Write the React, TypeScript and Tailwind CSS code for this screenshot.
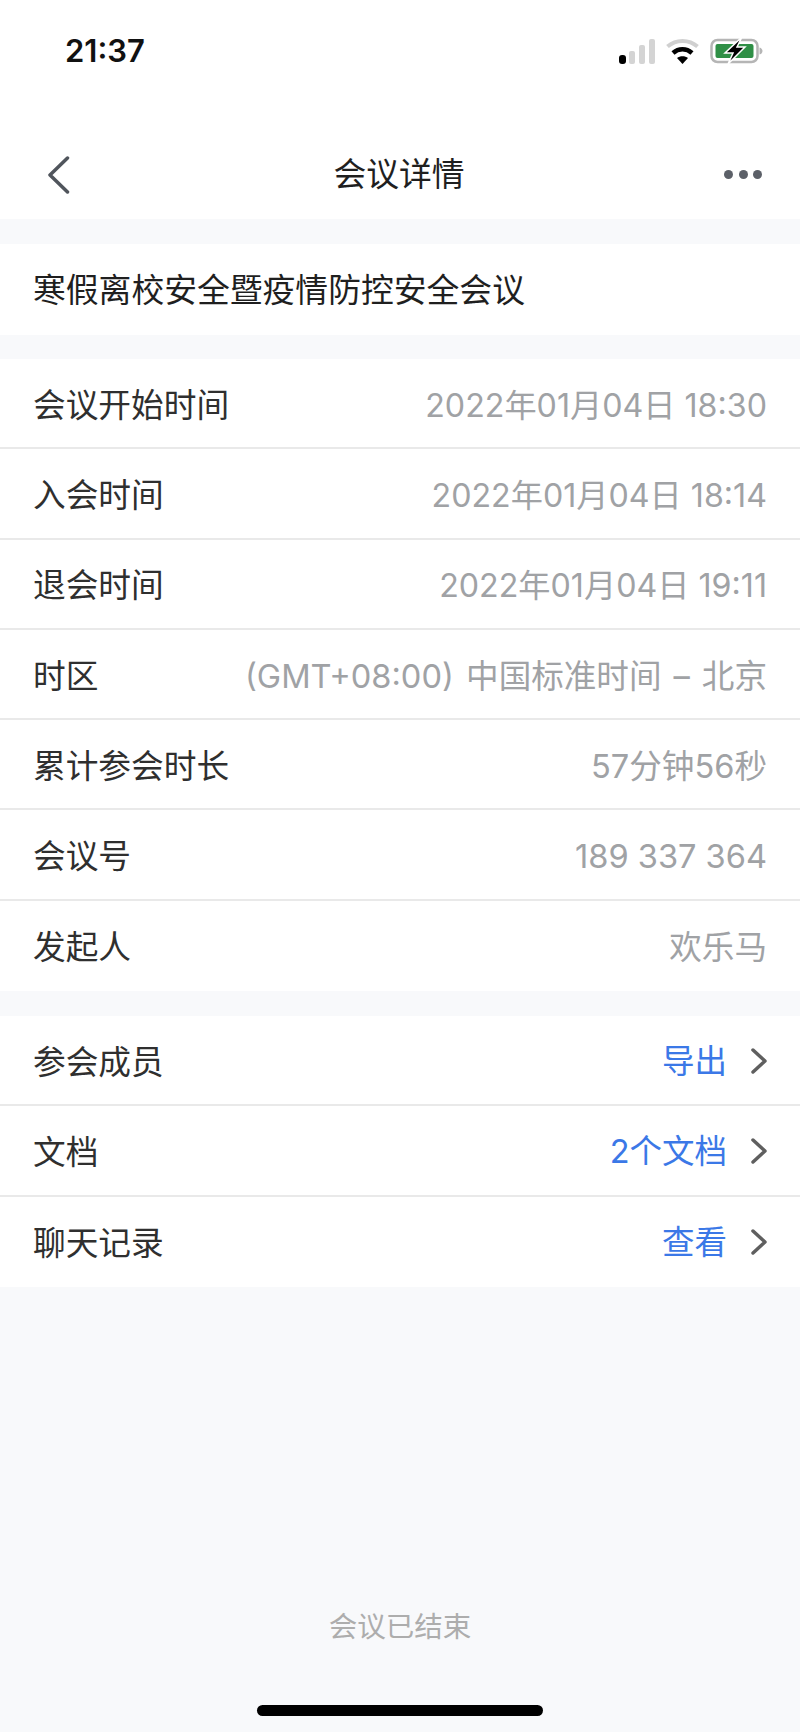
const font = "font-['Inter','Noto_Sans_CJK_SC',sans-serif]";

const infoRows: [string, React.ReactNode][] = [
  ["会议开始时间", <span className="text-[32.200px]">2022年01月04日 18:30</span>],
  ["入会时间", <span className="text-[32.200px]">2022年01月04日 18:14</span>],
  ["退会时间", <span className="text-[32.200px]">2022年01月04日 19:11</span>],
  [
    "时区",
    <>
      (GMT+08:00)<span className="ml-[3px]"> </span>中国标准时间<span className="mx-[12px]">–</span>北京
    </>,
  ],
  ["累计参会时长", "57分钟56秒"],
  ["会议号", "189 337 364"],
  ["发起人", "欢乐马"],
];

const linkRows = [
  ["参会成员", "导出"],
  ["文档", "2个文档"],
  ["聊天记录", "查看"],
];

function StatusIcons() {
  return (
    <div className="flex items-end gap-[11px]">
      {/* signal */}
      <svg width="36" height="25" viewBox="0 0 36 25">
        <rect x="0" y="16" width="7" height="9" rx="3" fill="#000" />
        <rect x="10" y="12" width="6" height="13" rx="2" fill="#d4d4d4" />
        <rect x="20" y="6" width="6" height="19" rx="2" fill="#d4d4d4" />
        <rect x="30" y="0" width="6" height="25" rx="2" fill="#d4d4d4" />
      </svg>
      {/* wifi */}
      <svg width="33" height="26" viewBox="0 0 33 26">
        <path d="M1.5 8.5C10 1 23 1 31.5 8.5" fill="none" stroke="#d0d0d0" strokeWidth="4" />
        <path d="M7 15C12.5 10 20.500 10 26 15" fill="none" stroke="#000" strokeWidth="4.500" />
        <path d="M11 20C14 17.500 19 17.500 22 20L16.500 26Z" fill="#000" />
      </svg>
      {/* battery */}
      <svg width="53" height="27" viewBox="0 0 53 27">
        <rect x="1.500" y="3" width="46" height="22" rx="6" fill="none" stroke="#b5b5b5" strokeWidth="2.500" />
        <rect x="5.500" y="7" width="38" height="14" rx="2" fill="#2f8f46" />
        <path d="M49.500 10.500c2 .5 3 2 3 3.500s-1 3-3 3.500z" fill="#b5b5b5" />
        <path d="M32 0 15 16h8L18 27l17-17h-8z" fill="#000" stroke="#fff" strokeWidth="1.500" />
      </svg>
    </div>
  );
}

function Row({ label, children }: { label: string; children: React.ReactNode }) {
  return (
    <div className="flex h-[90.3px] items-center justify-between border-b-2 border-[#e9e9e9] pl-[33px] pr-[33px] pt-[4px] last:border-b-0">
      <span className="text-[32.700px] text-[#2f2f2f]">{label}</span>
      {children}
    </div>
  );
}

export default function App() {
  return (
    <div className={`flex h-[1732px] w-[800px] flex-col bg-[#f8f9fb] ${font}`}>
      <header className="bg-white">
        <div className="flex h-[110px] items-start justify-between pl-[65px] pr-[37px] pt-[32px]">
          <span className="text-[31px] leading-[38px] font-semibold text-[#111]">21:37</span>
          <div className="pt-[5px]">
            <StatusIcons />
          </div>
        </div>
        <div className="relative flex h-[109px] items-center justify-between pl-[47px] pr-[38px] pt-[20px]">
          <svg width="23" height="38" viewBox="0 0 23 38">
            <path d="M20.500 2 3 19l17.500 17" fill="none" stroke="#50555c" strokeWidth="3.500" strokeLinecap="round" strokeLinejoin="round" />
          </svg>
          <span className="pl-[4px] text-[32.800px] text-[#1f1f1f]">会议详情</span>
          <div className="flex gap-[5.500px]">
            <span className="size-[9px] rounded-full bg-[#5c6068]" />
            <span className="size-[9px] rounded-full bg-[#5c6068]" />
            <span className="size-[9px] rounded-full bg-[#5c6068]" />
          </div>
        </div>
      </header>

      <div className="mt-[25px] flex h-[91px] items-center bg-white pl-[33px] pt-[2px]">
        <span className="text-[32.800px] text-[#1f1f1f]">寒假离校安全暨疫情防控安全会议</span>
      </div>

      <section className="mt-[24px] bg-white">
        {infoRows.map(([label, value]) => (
          <Row key={label} label={label}>
            <span className="text-[32.600px] whitespace-pre text-[#a0a2a5]">{value}</span>
          </Row>
        ))}
      </section>

      <section className="mt-[25px] bg-white">
        {linkRows.map(([label, value]) => (
          <Row key={label} label={label}>
            <div className="flex items-center gap-[24px]">
              <span className="text-[32.500px] text-[#3b78e7]">{value}</span>
              <svg width="16" height="26" viewBox="0 0 16 26" className="-mt-[3px]">
                <path d="M2 2l12 11L2 24" fill="none" stroke="#5f5f5f" strokeWidth="3.500" strokeLinecap="round" strokeLinejoin="round" />
              </svg>
            </div>
          </Row>
        ))}
      </section>

      <footer className="mt-auto flex flex-col items-center pb-[16px]">
        <span className="text-[28.500px] leading-[40px] text-[#adadad]">会议已结束</span>
        <div className="mt-[58px] h-[11px] w-[286px] rounded-full bg-black" />
      </footer>
    </div>
  );
}
